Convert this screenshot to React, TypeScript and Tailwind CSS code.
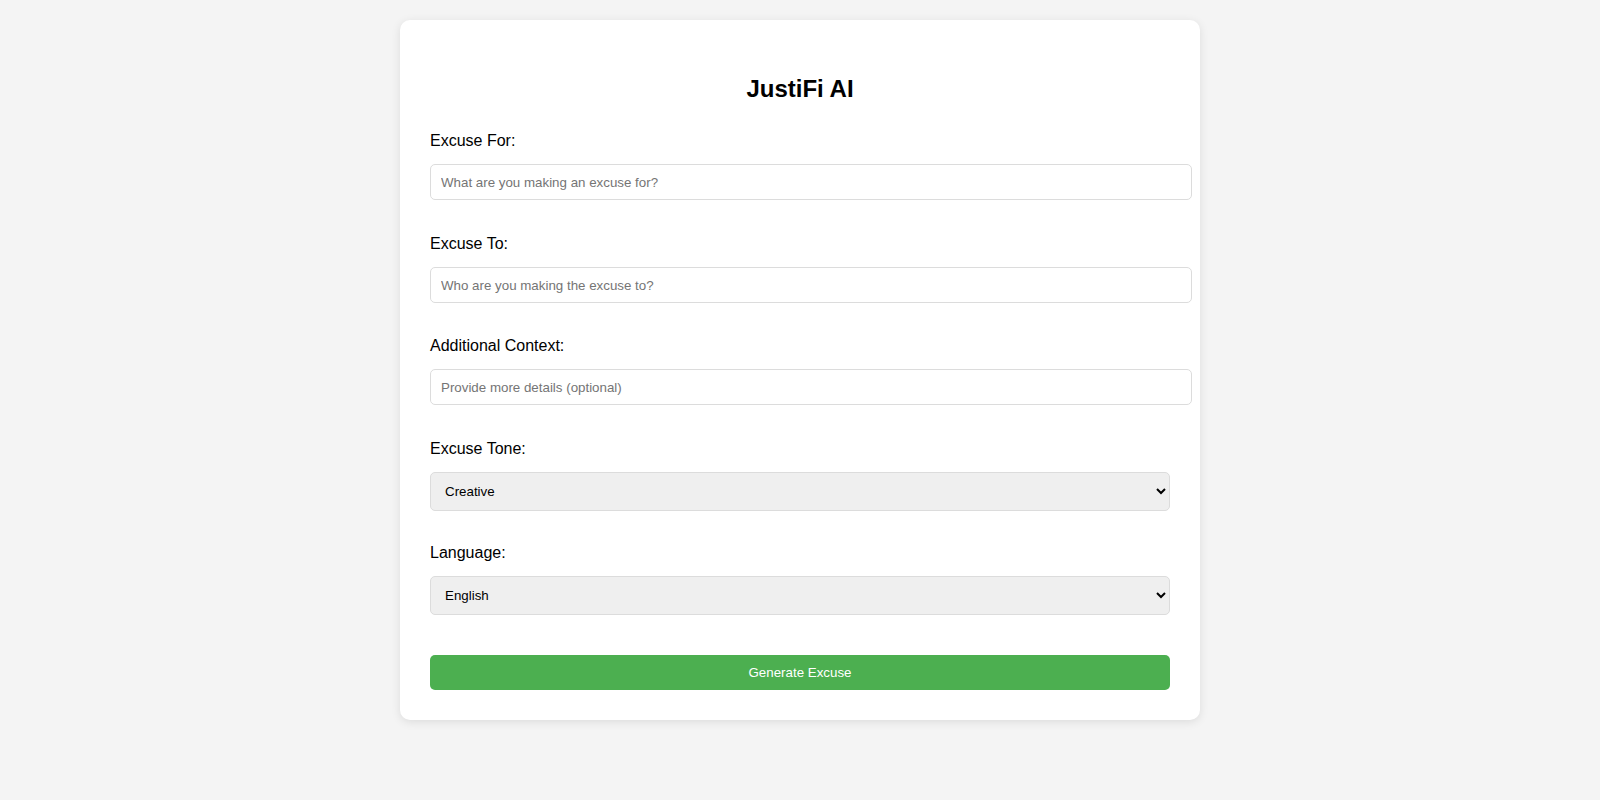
import React, { useState } from 'react';

const fieldLabel = 'block text-[16px] leading-[18px] mb-[14px] text-black';
const textInput =
    'block w-[762px] h-[36px] px-[10px] text-[13.33px] border border-[#dcdcdc] rounded-[5px] bg-white text-black placeholder:text-[#757575] outline-none';
const selectBox =
    'block w-full h-[39px] px-[10px] text-[13.33px] border border-[#dcdcdc] rounded-[5px] bg-[#efefef] text-black outline-none';

const App = () => {
    const [excuseFor, setExcuseFor] = useState('');
    const [excuseTo, setExcuseTo] = useState('');
    const [context, setContext] = useState('');
    const [tone, setTone] = useState('Creative');
    const [language, setLanguage] = useState('English');

    return (
        <div className="min-h-screen bg-[#f4f4f4] font-['Liberation_Sans',Arial,sans-serif] pt-[20px]">
            <div className="mx-auto w-[800px] bg-white rounded-[10px] shadow-[0_2px_10px_rgba(0,0,0,0.1)] px-[30px] pt-[55px] pb-[30px]">
                <h1 className="text-center text-[24px] leading-[28px] font-bold text-black mb-[29px]">JustiFi AI</h1>

                <div className="mb-[35px]">
                    <label htmlFor="excuseFor" className={fieldLabel}>Excuse For:</label>
                    <input
                        id="excuseFor"
                        value={excuseFor}
                        onChange={(e) => setExcuseFor(e.target.value)}
                        placeholder="What are you making an excuse for?"
                        className={textInput}
                    />
                </div>

                <div className="mb-[34px]">
                    <label htmlFor="excuseTo" className={fieldLabel}>Excuse To:</label>
                    <input
                        id="excuseTo"
                        value={excuseTo}
                        onChange={(e) => setExcuseTo(e.target.value)}
                        placeholder="Who are you making the excuse to?"
                        className={textInput}
                    />
                </div>

                <div className="mb-[35px]">
                    <label htmlFor="context" className={fieldLabel}>Additional Context:</label>
                    <input
                        id="context"
                        value={context}
                        onChange={(e) => setContext(e.target.value)}
                        placeholder="Provide more details (optional)"
                        className={textInput}
                    />
                </div>

                <div className="mb-[33px]">
                    <label htmlFor="tone" className={fieldLabel}>Excuse Tone:</label>
                    <select id="tone" value={tone} onChange={(e) => setTone(e.target.value)} className={selectBox}>
                        <option>Creative</option>
                        <option>Professional</option>
                        <option>Funny</option>
                        <option>Apologetic</option>
                    </select>
                </div>

                <div>
                    <label htmlFor="language" className={fieldLabel}>Language:</label>
                    <select id="language" value={language} onChange={(e) => setLanguage(e.target.value)} className={selectBox}>
                        <option>English</option>
                        <option>Spanish</option>
                        <option>French</option>
                        <option>German</option>
                    </select>
                </div>

                <button className="mt-[40px] block w-full h-[35px] bg-[#4caf50] text-white text-[13.33px] rounded-[5px] cursor-pointer">
                    Generate Excuse
                </button>
            </div>
        </div>
    );
};

export default App;
